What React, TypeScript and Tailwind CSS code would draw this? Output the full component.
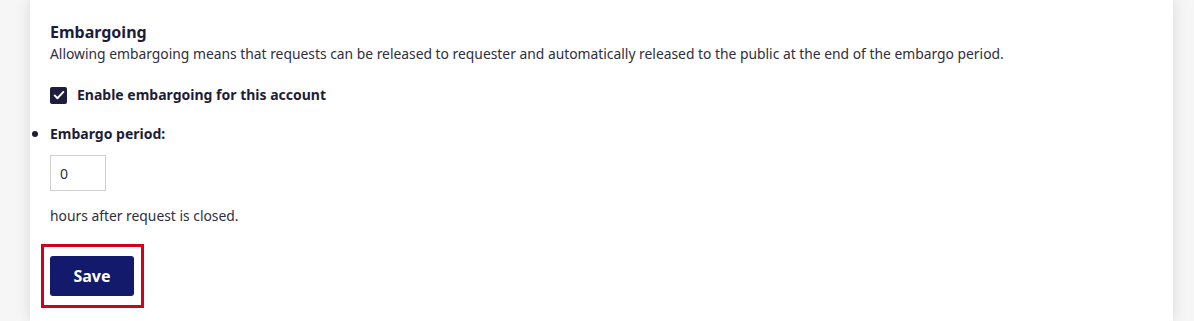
import React, { useState } from 'react';

function App() {
  const [enabled, setEnabled] = useState(true);
  const [hours, setHours] = useState('0');

  return (
    <div className="min-h-[321px] w-full bg-[#f6f6f7] font-['Noto_Sans',sans-serif] text-[#1d1d3a]">
      <div className="ml-[30px] w-[1143px] h-[321px] bg-white shadow-[0_0_14px_rgba(0,0,0,0.12)] pl-[20px] pt-[20px]">
        <h2 className="text-[16px] font-bold leading-[24px]">Embargoing</h2>
        <p className="text-[13.85px] leading-[20px] text-[#2e2e3e]">
          Allowing embargoing means that requests can be released to requester and automatically released to the public at the end of the embargo period.
        </p>

        <label className="mt-[21px] flex items-center gap-[10px] cursor-pointer">
          <span
            className="flex h-[17px] w-[17px] items-center justify-center rounded-[2px] bg-[#1d1d3f]"
            onClick={() => setEnabled(!enabled)}
          >
            {enabled && (
              <svg viewBox="0 0 16 16" className="h-[14px] w-[14px]" fill="none" stroke="white" strokeWidth="2.2" strokeLinecap="round" strokeLinejoin="round">
                <path d="M3 8.5l3.2 3.2L13 4.5" />
              </svg>
            )}
          </span>
          <span className="text-[14px] font-bold leading-[20px]">Enable embargoing for this account</span>
        </label>

        <ul className="mt-[16px] list-disc pl-0">
          <li className="ml-0 marker:text-[#1d1d3a]">
            <span className="text-[14px] font-bold leading-[20px]">Embargo period:</span>
            <div className="mt-[10px]">
              <input
                value={hours}
                onChange={(e) => setHours(e.target.value)}
                className="h-[36px] w-[56px] border border-[#cfcfcf] px-[9px] text-[14px] text-[#2e2e3e] outline-none"
              />
            </div>
            <p className="mt-[15px] text-[13.85px] leading-[20px] text-[#2e2e3e]">hours after request is closed.</p>
          </li>
        </ul>

        <div className="mt-[18px] ml-[-9px] inline-block border-[3px] border-[#d0021b] p-[9px] pl-[6px] pr-[7px]">
          <button className="h-[40px] w-[84px] rounded-[3px] bg-[#131a6b] text-[16px] font-bold text-white">
            Save
          </button>
        </div>
      </div>
    </div>
  );
}

export default App;
